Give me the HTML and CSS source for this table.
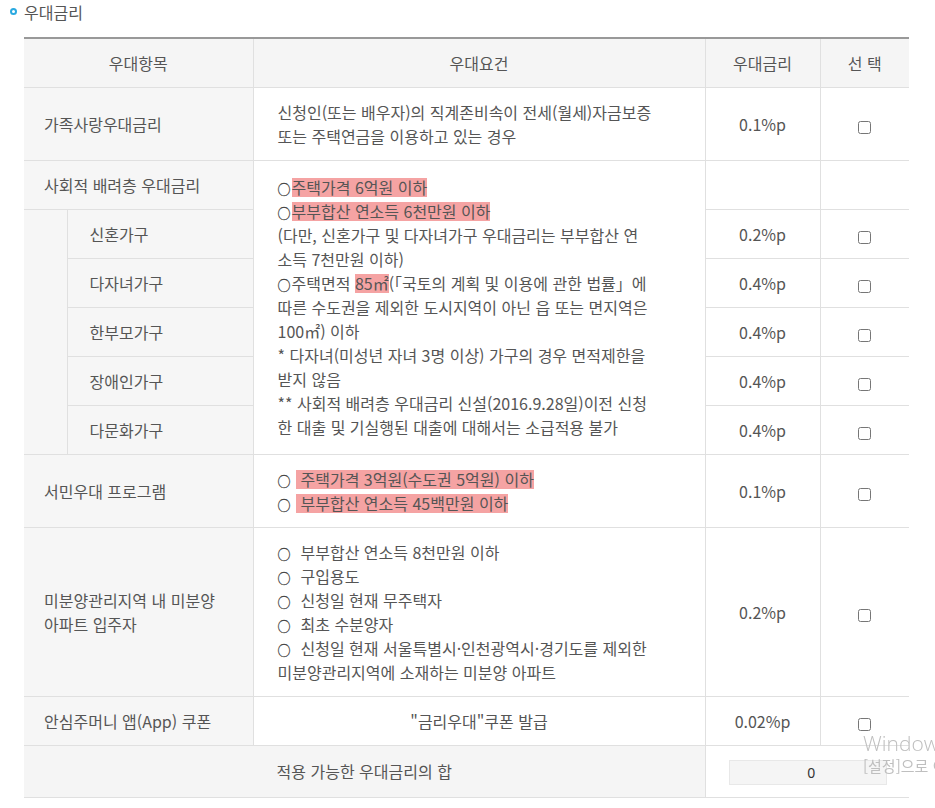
FILE: index.html
```html
<!DOCTYPE html>
<html lang="ko">
<head>
<meta charset="utf-8">
<title>우대금리</title>
<link rel="stylesheet" href="styles.css">
</head>
<body>
<div class="page">
  <h3 class="title"><span class="dot"></span>우대금리</h3>
  <table class="rate-table">
    <colgroup>
      <col class="c-indent"><col class="c-item"><col class="c-cond"><col class="c-rate"><col class="c-sel">
    </colgroup>
    <thead>
      <tr class="h-head">
        <th colspan="2">우대항목</th>
        <th>우대요건</th>
        <th>우대금리</th>
        <th>선 택</th>
      </tr>
    </thead>
    <tbody>
      <tr class="h-72">
        <td colspan="2" class="item">가족사랑우대금리</td>
        <td class="cond">신청인(또는 배우자)의 직계존비속이 전세(월세)자금보증<br>또는 주택연금을 이용하고 있는 경우</td>
        <td class="rate">0.1%p</td>
        <td class="sel"><input type="checkbox"></td>
      </tr>
      <tr class="h-48">
        <td colspan="2" class="item">사회적 배려층 우대금리</td>
        <td rowspan="6" class="cond"><span class="o">○</span><span class="hl">주택가격 6억원 이하</span><br><span class="o">○</span><span class="hl">부부합산 연소득 6천만원 이하</span><br>(다만, 신혼가구 및 다자녀가구 우대금리는 부부합산 연<br>소득 7천만원 이하)<br><span class="o">○</span>주택면적 <span class="hl">85㎡</span>(「국토의 계획 및 이용에 관한 법률」에<br>따른 수도권을 제외한 도시지역이 아닌 읍 또는 면지역은<br>100㎡) 이하<br>* 다자녀(미성년 자녀 3명 이상) 가구의 경우 면적제한을<br>받지 않음<br>** 사회적 배려층 우대금리 신설(2016.9.28일)이전 신청<br>한 대출 및 기실행된 대출에 대해서는 소급적용 불가</td>
        <td class="rate"></td>
        <td class="sel"></td>
      </tr>
      <tr class="h-48">
        <td rowspan="5" class="item indent"></td>
        <td class="item sub">신혼가구</td>
        <td class="rate">0.2%p</td>
        <td class="sel"><input type="checkbox"></td>
      </tr>
      <tr class="h-48">
        <td class="item sub">다자녀가구</td>
        <td class="rate">0.4%p</td>
        <td class="sel"><input type="checkbox"></td>
      </tr>
      <tr class="h-48">
        <td class="item sub">한부모가구</td>
        <td class="rate">0.4%p</td>
        <td class="sel"><input type="checkbox"></td>
      </tr>
      <tr class="h-48">
        <td class="item sub">장애인가구</td>
        <td class="rate">0.4%p</td>
        <td class="sel"><input type="checkbox"></td>
      </tr>
      <tr class="h-48">
        <td class="item sub">다문화가구</td>
        <td class="rate">0.4%p</td>
        <td class="sel"><input type="checkbox"></td>
      </tr>
      <tr class="h-72">
        <td colspan="2" class="item">서민우대 프로그램</td>
        <td class="cond"><span class="o">○</span> <span class="hl">&nbsp;주택가격 3억원(수도권 5억원) 이하 </span><br><span class="o">○</span> <span class="hl">&nbsp;부부합산 연소득 45백만원 이하</span></td>
        <td class="rate">0.1%p</td>
        <td class="sel"><input type="checkbox"></td>
      </tr>
      <tr class="h-168">
        <td colspan="2" class="item">미분양관리지역 내 미분양<br>아파트 입주자</td>
        <td class="cond"><span class="o">○</span>&nbsp; 부부합산 연소득 8천만원 이하<br><span class="o">○</span>&nbsp; 구입용도<br><span class="o">○</span>&nbsp; 신청일 현재 무주택자<br><span class="o">○</span>&nbsp; 최초 수분양자<br><span class="o">○</span>&nbsp; 신청일 현재 서울특별시·인천광역시·경기도를 제외한<br>미분양관리지역에 소재하는 미분양 아파트</td>
        <td class="rate">0.2%p</td>
        <td class="sel"><input type="checkbox"></td>
      </tr>
      <tr class="h-48">
        <td colspan="2" class="item">안심주머니 앱(App) 쿠폰</td>
        <td class="cond center">"금리우대"쿠폰 발급</td>
        <td class="rate">0.02%p</td>
        <td class="sel"><input type="checkbox"></td>
      </tr>
      <tr class="h-sum">
        <td colspan="3" class="sum-label">적용 가능한 우대금리의 합</td>
        <td colspan="2" class="sum-val"><input type="text" class="sum-input" value="0" readonly></td>
      </tr>
    </tbody>
  </table>
</div>
<div class="watermark">
  <div class="wm-1">Windows 정품 인증</div>
  <div class="wm-2">[설정]으로 이동하여 Windows를 정품 인증합니다.</div>
</div>
</body>
</html>
```

FILE: styles.css
```css
html, body {
  margin: 0;
  padding: 0;
  background: #fff;
}
body {
  font-family: "Noto Sans CJK KR", "Noto Sans", sans-serif;
  color: #555;
  font-size: 16px;
  overflow: hidden;
}
.page {
  padding: 0 26px 0 24px;
}
.title {
  margin: 0 0 13px -14px;
  font-size: 16px;
  font-weight: normal;
  line-height: 25px;
  height: 24px;
  display: flex;
  align-items: center;
  gap: 7px;
  color: #555;
}
.dot {
  width: 3px;
  height: 3px;
  border: 2px solid #2aa9e0;
  border-radius: 50%;
  margin-top: -1px;
}
.rate-table {
  width: 885px;
  table-layout: fixed;
  border-collapse: collapse;
  border-top: 2px solid #999;
}
.c-indent { width: 43px; }
.c-item { width: 186px; }
.c-cond { width: 452px; }
.c-rate { width: 115px; }
.c-sel { width: 89px; }

.rate-table th,
.rate-table td {
  border: 1px solid #e0e0e0;
  padding: 0;
  vertical-align: middle;
  line-height: 24px;
  font-weight: normal;
}
.rate-table tr > :first-child { border-left: none; }
.rate-table tr > :last-child { border-right: none; }

.rate-table th {
  background: #f5f5f5;
  text-align: center;
  color: #555;
}
.h-head { height: 49px; }
.h-48 { height: 49px; }
.h-72 { height: 73px; }
.h-168 { height: 169px; }
.h-sum { height: 52px; }

.item {
  background: #f6f6f6;
  padding-left: 20px !important;
  text-align: left;
}
.item.sub {
  padding-left: 22px !important;
}
.item.indent {
  padding-left: 0 !important;
}
.rate-table tr > .item.indent { border-left: none; }
.cond {
  padding: 0 10px 0 24px !important;
  white-space: nowrap;
  text-align: left;
}
.cond.center {
  text-align: center;
  padding: 0 !important;
}
.o {
  display: inline-block;
  width: 14px;
  font-size: 13px;
  line-height: 16px;
  text-align: left;
  color: #444;
  -webkit-text-stroke: 0.3px #444;
}
.rate,
.sel {
  text-align: center;
}
.sel input {
  margin: 3px 0 0 0;
  width: 13px;
  height: 13px;
  vertical-align: middle;
}
.hl {
  background: linear-gradient(to bottom, transparent 3px, #f5a3a3 3px, #f5a3a3 22px, transparent 22px);
}
.sum-label {
  background: #f5f5f5;
  text-align: center;
}
.sum-val {
  text-align: center;
  background: #fff;
}
.sum-input {
  box-sizing: border-box;
  width: 158px;
  height: 25px;
  border: 1px solid #e8e8e8;
  background: #f5f5f5;
  text-align: center;
  font-family: "Noto Sans", sans-serif;
  font-size: 14px;
  color: #333;
  padding: 0 0 0 6px;
  margin-left: 2px;
  vertical-align: middle;
  outline: none;
}
.watermark {
  position: fixed;
  left: 863px;
  top: 729px;
  color: #bfbfbf;
  white-space: nowrap;
  pointer-events: none;
}
.wm-1 {
  font-family: "Open Sans", "Noto Sans CJK KR", sans-serif;
  font-weight: 300;
  font-size: 21px;
  line-height: 28px;
}
.wm-2 {
  font-family: "Noto Sans CJK KR", sans-serif;
  font-size: 15px;
  line-height: 20px;
  margin-top: -1px;
}
```
